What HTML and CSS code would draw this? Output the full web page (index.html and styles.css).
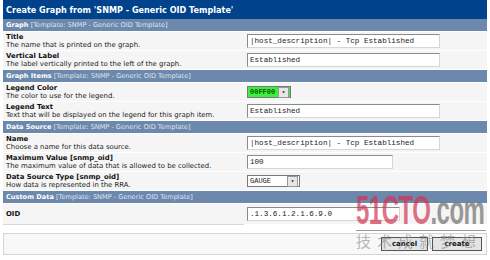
FILE: index.html
```html
<!DOCTYPE html>
<html lang="en">
<head>
  <meta charset="UTF-8" />
  <title>Create Graph</title>
  <link rel="stylesheet" href="styles.css">
</head>
<body>
  <table class="form">
    <tr><td colspan="2" class="title">Create Graph from 'SNMP - Generic OID Template'</td></tr>

    <tr><td colspan="2" class="head"><b>Graph</b> [Template: SNMP - Generic OID Template]</td></tr>
    <tr>
      <td class="label"><b>Title</b><br>The name that is printed on the graph.</td>
      <td class="field"><input class="txt wide" value="|host_description| - Tcp Established"></td>
    </tr>
    <tr>
      <td class="label"><b>Vertical Label</b><br>The label vertically printed to the left of the graph.</td>
      <td class="field"><input class="txt wide" value="Established"></td>
    </tr>

    <tr><td colspan="2" class="head"><b>Graph Items</b> [Template: SNMP - Generic OID Template]</td></tr>
    <tr>
      <td class="label"><b>Legend Color</b><br>The color to use for the legend.</td>
      <td class="field"><div class="sel green"><span>00FF00</span><i>&#9662;</i></div></td>
    </tr>
    <tr>
      <td class="label"><b>Legend Text</b><br>Text that will be displayed on the legend for this graph item.</td>
      <td class="field"><input class="txt wide" value="Established"></td>
    </tr>

    <tr><td colspan="2" class="head"><b>Data Source</b> [Template: SNMP - Generic OID Template]</td></tr>
    <tr>
      <td class="label"><b>Name</b><br>Choose a name for this data source.</td>
      <td class="field"><input class="txt wide" value="|host_description| - Tcp Established"></td>
    </tr>
    <tr>
      <td class="label"><b>Maximum Value [snmp_oid]</b><br>The maximum value of data that is allowed to be collected.</td>
      <td class="field"><input class="txt mid" value="100"></td>
    </tr>
    <tr>
      <td class="label"><b>Data Source Type [snmp_oid]</b><br>How data is represented in the RRA.</td>
      <td class="field"><div class="sel gauge"><span>GAUGE</span><i>&#9662;</i></div></td>
    </tr>

    <tr><td colspan="2" class="head"><b>Custom Data</b> [Template: SNMP - Generic OID Template]</td></tr>
    <tr>
      <td class="label oid"><b>OID</b></td>
      <td class="field"><input class="txt mid oidbox" value=".1.3.6.1.2.1.6.9.0"></td>
    </tr>
  </table>

  <div class="actions">
    <button class="btn">cancel</button>
    <button class="btn">create</button>
  </div>

  <!-- 51CTO watermark over the bottom right corner -->
  <div class="mark">
    <div class="logo"><span class="red">51CTO</span>.com</div>
    <div class="slogan">技术成就梦想</div>
  </div>
</body>
</html>
```

FILE: styles.css
```css
body {
  margin: 0;
  padding: 0 3px;
  background: #ffffff;
  font-family: 'DejaVu Sans', Verdana, sans-serif;
  position: relative;
  width: 484px;
  overflow: hidden;
}

.form {
  width: 484px;
  border-collapse: collapse;
  font-size: 6.9px;
  color: #222;
}

.form td {
  padding: 0 3px;
}

.title {
  background: #00438c;
  color: #fff;
  font-weight: bold;
  font-size: 8.1px;
  height: 19px;
  padding: 0 3px;
}

.head {
  background: #6d88ad;
  color: #dfe6f0;
  height: 12px;
  font-size: 6.6px;
  border-bottom: 1px solid #fff;
}

.head b {
  color: #fff;
}

.label {
  background: #f5f5f5;
  height: 18px;
  line-height: 8.5px;
  width: 235px;
  border-bottom: 1px solid #fff;
}

.label b {
  color: #111;
}

.label.oid {
  height: 20px;
  border-bottom: 1px solid #d8d8d8;
}

.field {
  background: #f5f5f5;
  border-bottom: 1px solid #fff;
}

.txt {
  box-sizing: border-box;
  height: 14px;
  padding: 0 2px;
  border: 1px solid #8a8a8a;
  border-right-color: #d6d6d6;
  border-bottom-color: #d6d6d6;
  background: #fff;
  font-family: 'Liberation Mono', monospace;
  font-size: 7.6px;
  color: #222;
  display: block;
}

.wide {
  width: 193px;
}

.mid {
  width: 146px;
}

.oidbox {
  width: 153px;
}

.sel {
  display: flex;
  align-items: center;
  justify-content: space-between;
  height: 12px;
  border: 1px solid #777;
  font-family: 'Liberation Mono', monospace;
  font-size: 7px;
  box-sizing: border-box;
  padding-left: 2px;
}

.sel i {
  font-style: normal;
  width: 9px;
  height: 9px;
  background: #e6e6e6;
  border: 1px solid #999;
  font-size: 6px;
  line-height: 9px;
  text-align: center;
  margin-right: 1px;
}

.green {
  width: 44px;
  background: #3cf03c;
}

.green span {
  color: #0a5a0a;
  font-weight: bold;
}

.gauge {
  width: 53px;
  background: #fff;
}

.actions {
  margin-top: 8px;
  height: 22px;
  box-sizing: border-box;
  border: 1px solid #d4d4d4;
  background: #f8f8f8;
  display: flex;
  justify-content: flex-end;
  align-items: center;
  gap: 4px;
  padding-right: 4px;
}

.btn {
  font-family: 'DejaVu Sans', Verdana, sans-serif;
  font-weight: bold;
  font-size: 7px;
  height: 14px;
  padding: 0 4px;
  background: #e4e4e4;
  border: 1px solid #555;
  color: #111;
}

.btn:first-child {
  width: 47px;
}

.btn:last-child {
  width: 50px;
}

.mark {
  position: absolute;
  left: 356px;
  top: 190px;
  width: 130px;
  pointer-events: none;
}

.logo {
  font-family: 'Liberation Sans', Arial, sans-serif;
  font-weight: bold;
  font-size: 24px;
  line-height: 24px;
  color: rgba(120, 120, 120, 0.75);
  letter-spacing: -0.5px;
  white-space: nowrap;
  transform-origin: 0 0;
  transform: scale(1, 1.7);
  height: 24px;
  margin-bottom: 16px;
}

.logo .red {
  color: rgba(210, 50, 80, 0.7);
}

.slogan {
  font-family: 'Noto Sans CJK SC', sans-serif;
  font-size: 15px;
  line-height: 18px;
  letter-spacing: 6px;
  color: rgba(120, 120, 120, 0.55);
  white-space: nowrap;
  border-top: 1px solid #999;
  padding-top: 1px;
}
```
